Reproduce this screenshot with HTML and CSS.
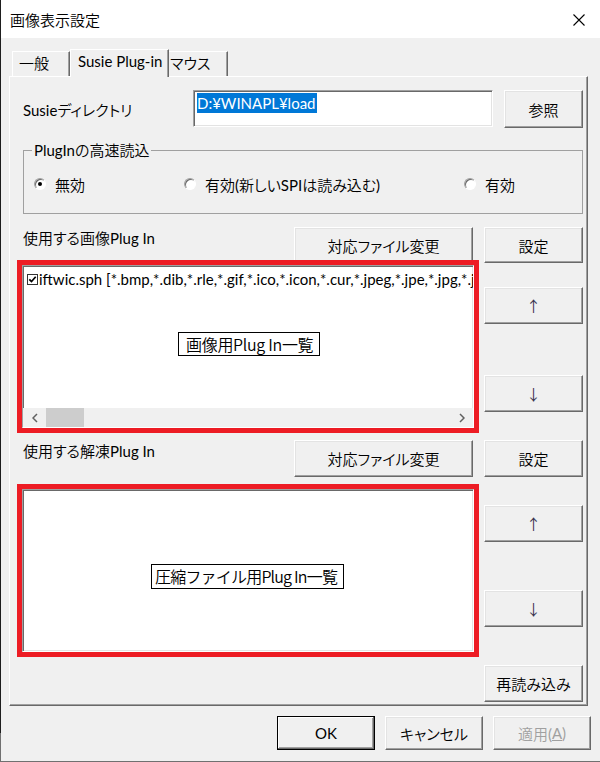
FILE: index.html
```html
<!DOCTYPE html>
<html lang="ja">
<head>
<meta charset="utf-8">
<title>画像表示設定</title>
<link rel="stylesheet" href="styles.css">
</head>
<body>
<div class="window">
  <div class="titlebar">
    <span class="title">画像表示設定</span>
    <svg class="close" width="12" height="12" viewBox="0 0 12 12"><path d="M0.5 0.5L11.5 11.5M11.5 0.5L0.5 11.5" stroke="#000" stroke-width="1.1" fill="none"/></svg>
  </div>
  <div class="tabs">
    <div class="tab t-general">一般</div>
    <div class="tab t-active">Susie Plug-in</div>
    <div class="tab t-mouse">マウス</div>
  </div>
  <div class="panel">
    <div class="dir-row">
      <span class="dir-label">Susieディレクトリ</span>
      <div class="edit"><span class="sel">D:¥WINAPL¥load</span></div>
      <button class="btn ref-btn">参照</button>
    </div>
    <fieldset class="group">
      <legend>PlugInの高速読込</legend>
      <div class="radios">
        <div class="radio r1"><span class="circle on"></span>無効</div>
        <div class="radio r2"><span class="circle"></span>有効(新しいSPIは読み込む)</div>
        <div class="radio r3"><span class="circle"></span>有効</div>
      </div>
    </fieldset>
    <div class="head-row">
      <span class="label">使用する画像Plug In</span>
      <button class="btn wide">対応ファイル変更</button>
      <button class="btn side">設定</button>
    </div>
    <div class="list-row l1">
      <div class="listbox">
        <div class="item">
          <svg class="check" width="11" height="11" viewBox="0 0 11 11"><rect x="0.5" y="0.5" width="10" height="10" fill="#fff" stroke="#333"/><path d="M2.3 5.3L4.5 7.6L8.7 2.8" fill="none" stroke="#000" stroke-width="1.7"/></svg>
          <span class="item-text">iftwic.sph [*.bmp,*.dib,*.rle,*.gif,*.ico,*.icon,*.cur,*.jpeg,*.jpe,*.jpg,*.jfif,*.png,*.tif,*.tiff]</span>
        </div>
        <div class="hscroll">
          <span class="sb-arrow"><svg width="6" height="10" viewBox="0 0 6 10"><path d="M5 1L1 5L5 9" fill="none" stroke="#606060" stroke-width="1.5"/></svg></span>
          <span class="thumb"></span>
          <span class="sb-track"></span>
          <span class="sb-arrow"><svg width="6" height="10" viewBox="0 0 6 10"><path d="M1 1L5 5L1 9" fill="none" stroke="#606060" stroke-width="1.5"/></svg></span>
        </div>
        <div class="note n1">画像用Plug In一覧</div>
      </div>
      <div class="side-col">
        <button class="btn up">↑</button>
        <button class="btn down">↓</button>
      </div>
    </div>
    <div class="head-row row4">
      <span class="label">使用する解凍Plug In</span>
      <button class="btn wide">対応ファイル変更</button>
      <button class="btn side">設定</button>
    </div>
    <div class="list-row l2">
      <div class="listbox">
        <div class="note n2">圧縮ファイル用Plug In一覧</div>
      </div>
      <div class="side-col">
        <button class="btn up">↑</button>
        <button class="btn down">↓</button>
      </div>
    </div>
    <div class="reload-row">
      <button class="btn side reload">再読み込み</button>
    </div>
  </div>
  <div class="footer">
    <button class="btn default">OK</button>
    <button class="btn">キャンセル</button>
    <button class="btn disabled">適用(<u>A</u>)</button>
  </div>
</div>
</body>
</html>
```

FILE: styles.css
```css
* { box-sizing: border-box; }
html, body { margin: 0; padding: 0; }
body {
  width: 600px;
  height: 762px;
  overflow: hidden;
  background: #f0f0f0;
  color: #000;
  font-family: "Lato", "Noto Sans CJK JP DemiLight", "Noto Sans CJK JP", sans-serif;
  font-size: 15px;
  font-weight: 400;
  font-feature-settings: "palt" 1;
}
.window {
  width: 600px;
  height: 762px;
  padding-left: 1px;
  border-bottom: 1px solid #707070;
  background: linear-gradient(to bottom, #1e1e1e 733px, #707070 733px) left top / 1px 100% no-repeat, #f0f0f0;
}
.titlebar {
  height: 38px;
  background: #fff;
  display: flex;
  align-items: center;
  justify-content: space-between;
  padding: 1px 15px 0 9px;
}
.title { line-height: 20px; font-feature-settings: normal; }
.close { display: block; }

.tabs {
  display: flex;
  align-items: flex-end;
  height: 27px;
  margin: 11px 0 0 11px;
  position: relative;
  z-index: 1;
}
.tab {
  height: 25px;
  line-height: 23px;
  background: #f0f0f0;
  border-top: 1px solid #fff;
  border-left: 1px solid #fff;
  border-right: 1px solid #696969;
  box-shadow: inset -1px 0 #a0a0a0;
  white-space: nowrap;
}
.t-general { width: 58px; padding-left: 6px; }
.t-active { width: 99px; height: 28px; margin-bottom: -1px; padding-left: 7px; }
.t-mouse { width: 59px; padding-left: 1px; border-left: none; }

.panel {
  margin-left: 8px;
  width: 579px;
  height: 630px;
  background: #f0f0f0;
  border: 1px solid;
  border-color: #fff #696969 #696969 #fff;
  box-shadow: inset -1px -1px #a0a0a0;
  padding: 13px 4px 0 12px;
}

.btn {
  font: inherit;
  font-feature-settings: "palt" 1;
  color: #000;
  background: #f0f0f0;
  border: 1px solid;
  border-color: #fff #696969 #696969 #fff;
  box-shadow: inset -1px -1px #a0a0a0, inset 1px 1px #e3e3e3;
  padding: 0;
  margin: 0;
  display: flex;
  align-items: center;
  justify-content: center;
  white-space: nowrap;
}

.dir-row { display: flex; height: 38px; }
.dir-label { width: 171px; padding-left: 1px; display: flex; align-items: center; }
.edit {
  width: 300px;
  height: 37px;
  background: #fff;
  border: 1px solid;
  border-color: #a0a0a0 #fff #fff #a0a0a0;
  box-shadow: inset 1px 1px #696969, inset -1px -1px #e3e3e3;
  padding: 2px 0 0 3px;
}
.sel {
  display: inline-block;
  height: 20px;
  line-height: 20px;
  background: #0078d7;
  color: #fff;
  padding: 0 1px 0 0;
}
.ref-btn { margin-left: 11px; width: 79px; height: 38px; }

.group {
  margin: 12px 0 0 1px;
  padding: 0;
  min-width: 0;
  height: 74px;
  border: 1px solid #a0a0a0;
}
.group legend {
  margin-left: 8px;
  padding: 0 2px;
  line-height: 20px;
}
.radios {
  display: flex;
  align-items: center;
  height: 20px;
  margin: 14px 0 0 10px;
}
.radio { display: flex; align-items: center; white-space: nowrap; }
.r1 { width: 150px; }
.r2 { width: 280px; }
.circle {
  position: relative;
  width: 12px;
  height: 12px;
  margin-right: 9px;
  border-radius: 50%;
  background: #fff;
  border: 1px solid;
  border-color: #a0a0a0 #fff #fff #a0a0a0;
  box-shadow: inset 1px 1px #696969;
}
.circle.on::after {
  content: "";
  position: absolute;
  left: 3px;
  top: 3px;
  width: 4px;
  height: 4px;
  border-radius: 50%;
  background: #000;
}

.head-row { display: flex; height: 36px; margin-top: 13px; }
.head-row .label { flex: 1; padding: 1px 0 0 1px; line-height: 20px; }
.wide { width: 179px; height: 36px; }
.head-row .side { width: 99px; height: 36px; margin-left: 11px; }
.row4 { height: 37px; margin-top: 12px; }
.row4 .wide, .row4 .side { height: 37px; }

.list-row { display: flex; margin-top: 2px; }
.l2 { margin-top: 12px; }
.listbox {
  position: relative;
  width: 452px;
  height: 163px;
  background: #fff;
  border: 1px solid;
  border-color: #a0a0a0 #fff #fff #a0a0a0;
  box-shadow: inset 1px 1px #696969, inset -1px -1px #e3e3e3;
  outline: 5px solid #ed1c24;
  display: flex;
  flex-direction: column;
}
.item {
  display: flex;
  align-items: center;
  height: 22px;
  margin-top: 2px;
  padding-left: 4px;
  white-space: nowrap;
  overflow: hidden;
}
.check { flex: none; margin-right: 1px; }
.item-text { font-size: 15px; }
.hscroll {
  margin-top: auto;
  height: 19px;
  display: flex;
  background: #f0f0f0;
}
.sb-arrow { width: 23px; display: flex; align-items: center; justify-content: center; }
.thumb { width: 38px; background: #cdcdcd; }
.sb-track { flex: 1; }

.note {
  position: absolute;
  background: #fff;
  border: 1px solid #000;
  font-family: "Noto Sans CJK JP DemiLight", "Noto Sans CJK JP", sans-serif;
  font-size: 16px;
  font-weight: 400;
  font-feature-settings: normal;
  white-space: nowrap;
}
.n1 { left: 155px; top: 66px; height: 24px; line-height: 22px; padding: 0 6px 0 7px; letter-spacing: -0.3px; }
.n2 { left: 128px; top: 74px; height: 25px; line-height: 23px; padding: 0 6px 0 3px; letter-spacing: -0.8px; }

.side-col { width: 99px; margin-left: 10px; display: flex; flex-direction: column; }
.side-col .btn { height: 37px; color: #3c3550; font-family: "Noto Sans CJK JP", sans-serif; }
.l1 .up { margin-top: 22px; }
.l1 .down { margin-top: 51px; }
.l2 .up { margin-top: 16px; }
.l2 .down { margin-top: 48px; }

.reload-row { display: flex; justify-content: flex-end; margin-top: 13px; }
.reload { width: 99px; height: 37px; }

.footer {
  display: flex;
  justify-content: flex-end;
  gap: 10px;
  margin-top: 10px;
  padding-right: 9px;
}
.footer .btn { width: 98px; height: 34px; }
.footer .default { border-color: #000; box-shadow: inset -1px -1px #696969, inset 1px 1px #fff, inset -2px -2px #a0a0a0; }
.footer .disabled { color: #a0a0a0; }
```
